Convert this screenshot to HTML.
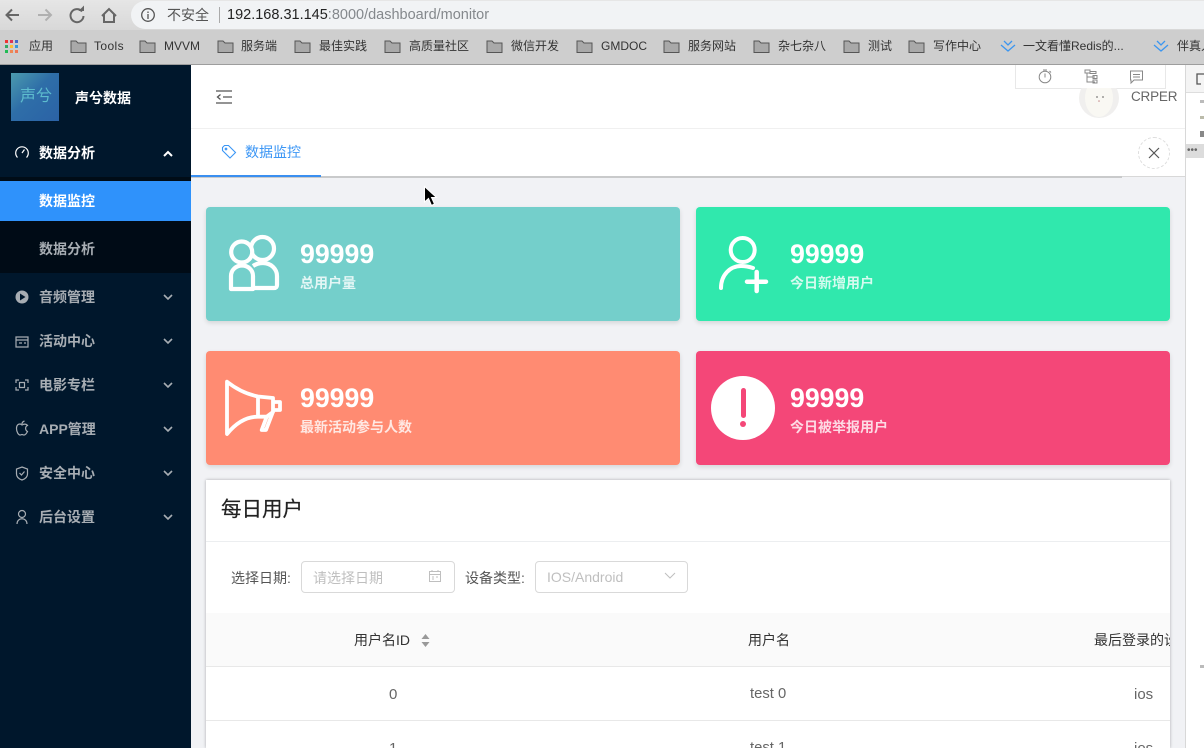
<!DOCTYPE html>
<html lang="zh"><head><meta charset="utf-8"><title>monitor</title>
<style>
html,body{margin:0;padding:0;width:1204px;height:748px;overflow:hidden;background:#f1f2f5}
body{position:relative;font-family:"Liberation Sans","Noto Sans CJK SC",sans-serif;font-size:14px;color:#555}
div,span,svg{position:absolute}
.t{white-space:nowrap;line-height:20px}
.bm{font-size:12px;color:#333;top:37px;line-height:18px;white-space:nowrap}
.menu{left:39px;font-size:14px;font-weight:700;color:#a7adb3;white-space:nowrap;line-height:20px}
.card{width:474px;height:114px;border-radius:4px;box-shadow:0 2px 5px rgba(0,0,0,.12)}
.num{left:94px;font-size:26.700px;font-weight:700;color:#fff;line-height:30px;white-space:nowrap}
.lbl{left:94px;font-size:14px;font-weight:700;color:rgba(255,255,255,.8);line-height:20px;white-space:nowrap}
</style></head><body>

<!-- chrome toolbar -->
<div style="left:0;top:0;width:1204px;height:30px;background:linear-gradient(#e6e6e6,#d8d8d8)"></div>
<div style="left:0;top:30px;width:1204px;height:34px;background:#cecece"></div>
<div style="left:0;top:64px;width:1204px;height:1px;background:#9d9d9d"></div>
<svg style="left:0;top:0" width="125" height="30" fill="none" stroke-width="2">
<path d="M19 15H7M12 9.500L6.500 15L12 20.500" stroke="#666"/>
<path d="M38 15H51M45.500 9.500L51 15L45.500 20.500" stroke="#b0b0b0"/>
<path d="M82 11.500A6.500 6.500 0 1 0 83.500 16" stroke="#666"/><path d="M78.500 11H84V5.500" fill="#666" stroke="none"/>
<path d="M102 16L109 9L116 16M104 14.500V22H114V14.500" stroke="#666"/>
</svg>
<div style="left:131px;top:1px;width:1073px;height:28px;background:#f1f3f5;border-radius:14px 0 0 14px"></div>
<svg style="left:140px;top:7px" width="16" height="16" fill="none" stroke="#555" stroke-width="1.300"><circle cx="8" cy="8" r="6.300"/><path d="M8 7V12M8 4.500V6"/></svg>
<div class="t" style="left:167px;top:5px;font-size:14px;color:#555">不安全</div>
<div style="left:219px;top:7px;width:1px;height:16px;background:#aaa"></div>
<div class="t" style="left:227px;top:5px;font-size:14.500px;color:#222">192.168.31.145<span style="position:static;color:#84888c">:8000/dashboard/monitor</span></div>

<!-- bookmarks -->
<svg style="left:5px;top:40px" width="15" height="14">
<g fill="#e33"><rect x="0" y="0" width="3" height="3"/><rect x="5" y="0" width="3" height="3" fill="#d35"/><rect x="10" y="0" width="3" height="3" fill="#46c"/></g>
<rect x="0" y="5" width="3" height="3" fill="#3a6"/><rect x="5" y="5" width="3" height="3" fill="#fb3"/><rect x="10" y="5" width="3" height="3" fill="#39d"/>
<rect x="0" y="10" width="3" height="3" fill="#2b5"/><rect x="5" y="10" width="3" height="3" fill="#e85"/><rect x="10" y="10" width="3" height="3" fill="#e75"/></svg>
<div class="bm" style="left:29px">应用</div>
<svg style="left:0;top:38px" width="1204" height="16" fill="#a9a9a9" stroke="#555" stroke-width="1">
<path d="M62 3H67L69 5H77V14.500H62Z" transform="translate(9 0)"/>
<path d="M62 3H67L69 5H77V14.500H62Z" transform="translate(78 0)"/>
<path d="M62 3H67L69 5H77V14.500H62Z" transform="translate(156 0)"/>
<path d="M62 3H67L69 5H77V14.500H62Z" transform="translate(233 0)"/>
<path d="M62 3H67L69 5H77V14.500H62Z" transform="translate(323 0)"/>
<path d="M62 3H67L69 5H77V14.500H62Z" transform="translate(425 0)"/>
<path d="M62 3H67L69 5H77V14.500H62Z" transform="translate(515 0)"/>
<path d="M62 3H67L69 5H77V14.500H62Z" transform="translate(602 0)"/>
<path d="M62 3H67L69 5H77V14.500H62Z" transform="translate(692 0)"/>
<path d="M62 3H67L69 5H77V14.500H62Z" transform="translate(782 0)"/>
<path d="M62 3H67L69 5H77V14.500H62Z" transform="translate(847 0)"/>
<g fill="none" stroke="#3b96f0" stroke-width="1.300"><path d="M1004 3L1008 7L1012 3M1001 7L1008 13L1015 7"/><path d="M1157 3L1161 7L1165 3M1154 7L1161 13L1168 7"/></g>
</svg>
<div class="bm" style="left:94px;letter-spacing:.4px">Tools</div>
<div class="bm" style="left:164px">MVVM</div>
<div class="bm" style="left:241px">服务端</div>
<div class="bm" style="left:319px">最佳实践</div>
<div class="bm" style="left:409px">高质量社区</div>
<div class="bm" style="left:511px">微信开发</div>
<div class="bm" style="left:601px">GMDOC</div>
<div class="bm" style="left:688px">服务网站</div>
<div class="bm" style="left:778px">杂七杂八</div>
<div class="bm" style="left:868px">测试</div>
<div class="bm" style="left:933px">写作中心</div>
<div class="bm" style="left:1023px">一文看懂Redis的...</div>
<div class="bm" style="left:1177px">伴真人</div>

<!-- main bg -->
<div style="left:191px;top:65px;width:994px;height:683px;background:#f1f2f5"></div>
<div style="left:1185px;top:65px;width:19px;height:683px;background:#fff;border-left:1px solid #d8d8d8;box-sizing:border-box"></div>
<div style="left:1186px;top:65px;width:18px;height:27px;background:#f4f4f4;border-bottom:1px solid #ddd"></div>
<svg style="left:1196px;top:73px" width="8" height="13" fill="none" stroke="#555" stroke-width="1.300"><path d="M8 1H1V11H5"/></svg>
<div style="left:1186px;top:144px;width:18px;height:14px;background:#dcdcdc"></div>
<div class="t" style="left:1187px;top:141px;font-size:10px;color:#666">•••</div>
<div style="left:1200px;top:100px;width:4px;height:3px;background:#bbb"></div>
<div style="left:1200px;top:116px;width:4px;height:3px;background:#bba"></div>
<div style="left:1200px;top:131px;width:4px;height:6px;background:#888"></div>
<div style="left:1200px;top:665px;width:4px;height:3px;background:#bbb"></div>

<!-- header -->
<div style="left:191px;top:65px;width:994px;height:63px;background:#fff;border-bottom:1px solid #f0f0f0"></div>
<svg style="left:216px;top:90px" width="16" height="14" fill="none" stroke="#555" stroke-width="1.300"><path d="M0 1H16M7 7H16M0 13H16"/><path d="M4.500 4.500L1.500 7L4.500 9.500"/></svg>
<div style="left:1015px;top:65px;width:149px;height:23px;background:#fff;border:1px solid #e8e8e8;border-top:0"></div>
<svg style="left:1035px;top:67px" width="125" height="18" fill="none" stroke="#888" stroke-width="1">
<circle cx="10" cy="10" r="5.800"/><path d="M10 6.500V10.500M8 3H12M14.500 4L16 5.500"/>
<path d="M50 3H55V6H50ZM52 6V15H60M52 10H60M58 8.500H62V11.500H58ZM58 13H62V16H58ZM55 4.500H61V6.500H55Z"/>
<path d="M95.500 4H107.500V13H99L96 16V13H95.500ZM98 7.500H105M98 10H105"/>
</svg>
<svg style="left:1079px;top:88px" width="41" height="30"><ellipse cx="20" cy="10" rx="20" ry="20" fill="#f0efee"/><ellipse cx="20" cy="10" rx="14" ry="19" fill="#f9f8f3"/><path d="M17 9H19M23 9H25" stroke="#666"/><path d="M20 12L21 13.500H19Z" fill="#b77"/></svg>
<div class="t" style="left:1131px;top:87px;font-size:13.500px;letter-spacing:-.2px;color:#666">CRPER</div>

<!-- tabs -->
<div style="left:191px;top:129px;width:994px;height:47px;background:#fff"></div>
<div style="left:191px;top:176px;width:931px;height:2px;background:#c9cacb"></div>
<div style="left:1122px;top:176px;width:63px;height:1px;background:#d8d8d8"></div>
<div style="left:191px;top:175px;width:130px;height:2px;background:#3a8ff0"></div>
<svg style="left:221px;top:144px" width="16" height="16" fill="none" stroke="#3b96f5" stroke-width="1.100"><path d="M1.500 3.500L3.500 1.500H7.500L14.500 8.500L9 14L1.500 6.500Z"/><circle cx="5" cy="5" r="0.800"/></svg>
<div class="t" style="left:245px;top:142px;font-size:14px;color:#3b96f5">数据监控</div>
<div style="left:1138px;top:137px;width:30px;height:30px;border:1px dashed #ddd;border-radius:50%"></div>
<svg style="left:1148px;top:147px" width="12" height="12" stroke="#555" stroke-width="1.200"><path d="M1 1L11 11M11 1L1 11"/></svg>

<!-- sidebar -->
<div style="left:0;top:65px;width:191px;height:683px;background:#00172c"></div>
<div style="left:11px;top:73px;width:48px;height:48px;background:linear-gradient(135deg,#4b9aae 0%,#2e6ea8 45%,#2b62a6 100%)"></div>
<div class="t" style="left:20px;top:87px;font-size:16px;color:#63c5d3;opacity:.9">声兮</div>
<div class="t" style="left:75px;top:88px;font-size:14px;font-weight:700;color:#fff">声兮数据</div>

<div style="left:0;top:177px;width:191px;height:4px;background:#000c17"></div>
<div style="left:0;top:181px;width:191px;height:40px;background:#2f92fb"></div>
<div style="left:0;top:221px;width:191px;height:52px;background:#000b16"></div>
<div class="menu" style="top:143px;color:#fff">数据分析</div>
<div class="menu" style="top:191px;color:#fff">数据监控</div>
<div class="menu" style="top:239px">数据分析</div>
<div class="menu" style="top:287px">音频管理</div>
<div class="menu" style="top:331px">活动中心</div>
<div class="menu" style="top:375px">电影专栏</div>
<div class="menu" style="top:419px">APP管理</div>
<div class="menu" style="top:463px">安全中心</div>
<div class="menu" style="top:507px">后台设置</div>
<svg style="left:0;top:140px" width="191" height="390" fill="none" stroke="#a7adb3" stroke-width="1.200">
<path d="M164 16L168 12L172 16" stroke="#fff" stroke-width="2"/>
<path d="M164 155L168 159L172 155M164 199L168 203L172 199M164 243L168 247L172 243M164 287L168 291L172 287M164 331L168 335L172 331M164 375L168 379L172 375" stroke-width="1.600"/>
<path d="M17.500 17.500A6.300 6.300 0 1 1 26.500 17.500M22 13L24.500 9.500" stroke="#fff"/>
<circle cx="22" cy="157" r="6.500" fill="#a7adb3" stroke="none"/><path d="M20 153.500L25.500 157L20 160.500Z" fill="#00172c" stroke="none"/>
<path d="M16 197H28V207H16ZM16 200H28M19 203H22M24 203H26"/>
<path d="M16 243V240H19M25 240H28V243M28 247V250H25M19 250H16V247M19.500 242.500H24.500V247.500H19.500Z"/>
<path d="M22 285C20 283 16.500 284 16.500 288.500C16.500 292 18.500 295 20 295C21 295 21.500 294.500 22 294.500C22.500 294.500 23 295 24 295C25.500 295 26.500 293.500 27.500 291.500C25 290 25 286.500 27.500 285.500C26 283.500 23.500 284 22 285ZM22 284C22 282.500 23 281.500 24.500 281"/>
<path d="M22 327L27.500 329V334C27.500 337 25 339 22 340C19 339 16.500 337 16.500 334V329ZM19.500 333L21.500 335L24.500 331.500"/>
<circle cx="22" cy="374" r="3.500"/><path d="M17 384C17 377 27 377 27 384"/>
</svg>

<!-- cards -->
<div class="card" style="left:206px;top:207px;background:#74cfcb">
<svg style="left:20px;top:27px" width="56" height="62" fill="none" stroke="#fff" stroke-width="4.200" stroke-linejoin="round"><circle cx="36.500" cy="14.500" r="11.500"/><path d="M27 54H48C50 54 51 53 51 51V42C51 35 45 29 37 29C33 29 30 30 27 32"/><circle cx="15.700" cy="18" r="10.500" fill="#74cfcb"/><path d="M5 55V42C5 36 10 31.500 16 31.500C22 31.500 27 36 27 42V55Z" fill="#74cfcb"/></svg>
<div class="num" style="top:32px">99999</div><div class="lbl" style="top:66px">总用户量</div></div>

<div class="card" style="left:696px;top:207px;background:#30e8ad">
<svg style="left:20px;top:27px" width="56" height="62" fill="none" stroke="#fff" stroke-width="4" stroke-linecap="round"><circle cx="26.700" cy="16" r="12"/><path d="M5 54C5 41 14 32 25 32C30 32 34 33 37 34"/><path d="M31 47.700H50M40.700 38V57" stroke-width="4.500"/></svg>
<div class="num" style="top:32px">99999</div><div class="lbl" style="top:66px">今日新增用户</div></div>

<div class="card" style="left:206px;top:351px;background:#ff8b72">
<svg style="left:18px;top:27px" width="60" height="62" fill="none" stroke="#fff" stroke-width="3.800" stroke-linejoin="round"><path d="M3 3.700C12 11 22 16 34 18.500L49 20V34L42.700 38.700H34C22 38.700 12 45 3 56Z"/><path d="M34 18.500V38.700M49 24H56V32H49"/><path d="M49 33.700L42 52H37.700L42.700 38.700"/></svg>
<div class="num" style="top:32px">99999</div><div class="lbl" style="top:66px">最新活动参与人数</div></div>

<div class="card" style="left:696px;top:351px;background:#f44778">
<div style="left:15px;top:25px;width:64px;height:64px;background:#fff;border-radius:50%"></div>
<div style="left:44.500px;top:37px;width:5px;height:30px;background:#f44778;border-radius:2.500px"></div>
<div style="left:44px;top:70px;width:6px;height:6px;background:#f44778;border-radius:50%"></div>
<div class="num" style="top:32px">99999</div><div class="lbl" style="top:66px">今日被举报用户</div></div>

<!-- table card -->
<div style="left:206px;top:480px;width:964px;height:268px;background:#fff;box-shadow:0 0 3px rgba(0,0,0,.3);overflow:hidden">
<div style="left:0;top:61px;width:964px;height:1px;background:#eceef0"></div>
<div class="t" style="left:15px;top:18px;font-size:20.500px;line-height:24px;color:#222;-webkit-text-stroke:.2px #222">每日用户</div>
<div class="t" style="left:25px;top:88px;color:#555">选择日期:</div>
<div style="left:95px;top:81px;width:152px;height:30px;border:1px solid #d9d9d9;border-radius:4px"></div>
<div class="t" style="left:107px;top:88px;color:#bfbfbf">请选择日期</div>
<svg style="left:222px;top:89px" width="14" height="14" fill="none" stroke="#bfbfbf" stroke-width="1"><path d="M1.500 2.500H12.500V12.500H1.500ZM1.500 5.500H12.500M4 1V3M10 1V3M4 8H6M8 8H10M4 10H6"/></svg>
<div class="t" style="left:259px;top:88px;color:#555">设备类型:</div>
<div style="left:329px;top:81px;width:151px;height:30px;border:1px solid #d9d9d9;border-radius:4px"></div>
<div class="t" style="left:341px;top:87px;color:#bfbfbf">IOS/Android</div>
<svg style="left:458px;top:91px" width="12" height="9" fill="none" stroke="#bfbfbf" stroke-width="1"><path d="M1 2L6 7L11 2"/></svg>

<div style="left:0;top:133px;width:964px;height:53px;background:#fafafa"></div>
<div style="left:0;top:186px;width:964px;height:1px;background:#e8e8e8"></div>
<div style="left:0;top:240px;width:964px;height:1px;background:#e8e8e8"></div>
<div class="t" style="left:148px;top:150px;color:#333">用户名ID</div>
<svg style="left:214px;top:153px" width="12" height="15" fill="#999"><path d="M5.500 1L9.500 6H1.500ZM1.500 9H9.500L5.500 14Z"/></svg>
<div class="t" style="left:542px;top:150px;color:#333">用户名</div>
<div class="t" style="left:888px;top:150px;color:#333">最后登录的设备</div>
<div class="t" style="left:183px;top:204.500px;color:#666;font-size:15px">0</div>
<div class="t" style="left:544px;top:204px;color:#666;font-size:14.800px">test 0</div>
<div class="t" style="left:928px;top:204.500px;color:#666;font-size:15px">ios</div>
<div class="t" style="left:183px;top:258.500px;color:#666;font-size:15px">1</div>
<div class="t" style="left:544px;top:258px;color:#666;font-size:14.800px">test 1</div>
<div class="t" style="left:928px;top:258.500px;color:#666;font-size:15px">ios</div>
</div>

<!-- cursor -->
<svg style="left:423px;top:185px" width="16" height="23"><path d="M1.500 1.500V17L5.500 13.500L8.500 20.500L11.500 19L8.500 12.500H13.500Z" fill="#000" stroke="#fff" stroke-width="1"/></svg>
</body></html>
